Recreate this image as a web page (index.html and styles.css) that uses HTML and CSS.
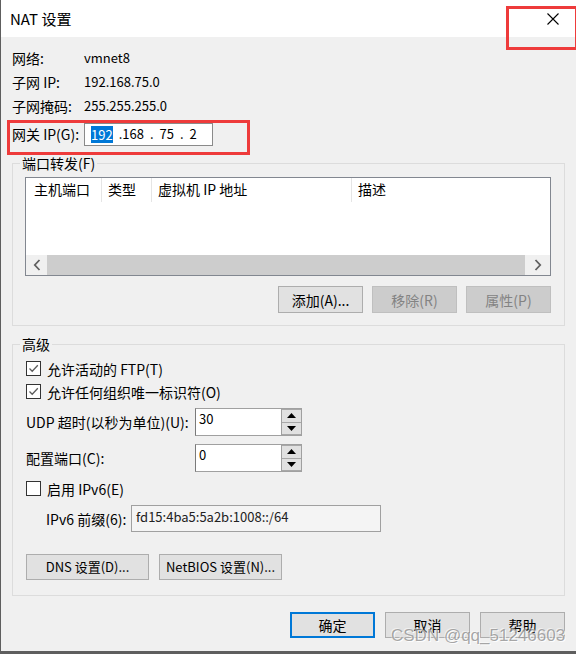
FILE: index.html
```html
<!DOCTYPE html>
<html lang="zh-CN">
<head>
<meta charset="utf-8">
<title>NAT 设置</title>
<link rel="stylesheet" href="styles.css">
</head>
<body>
<div class="win">
  <div class="titlebar">
    <span class="title">NAT 设置</span>
    <span class="close">
      <svg width="12" height="12" viewBox="0 0 12 12"><path d="M0.5 0.5 L11.5 11.5 M11.5 0.5 L0.5 11.5" stroke="#000" stroke-width="1.1" fill="none"/></svg>
    </span>
  </div>
  <div class="content">
    <div class="info">
      <div class="row"><span class="lbl">网络:</span><span class="val">vmnet8</span></div>
      <div class="row"><span class="lbl">子网 IP:</span><span class="val">192.168.75.0</span></div>
      <div class="row"><span class="lbl">子网掩码:</span><span class="val">255.255.255.0</span></div>
      <div class="row gw"><span class="lbl gwl">网关 IP(G):</span>
        <div class="ipbox"><span class="sel">192</span><span>.168</span><span>.</span><span>75</span><span>.</span><span>2</span></div>
      </div>
    </div>

    <fieldset class="group g1">
      <legend>端口转发(F)</legend>
      <div class="list">
        <div class="lhead">
          <div class="col c1">主机端口</div>
          <div class="col c2">类型</div>
          <div class="col c3">虚拟机 IP 地址</div>
          <div class="col c4">描述</div>
        </div>
        <div class="lbody"></div>
        <div class="hscroll">
          <span class="sarr sl"><svg width="8" height="12" viewBox="0 0 8 12"><path d="M6.5 1 L1.8 6 L6.5 11" stroke="#606060" stroke-width="1.8" fill="none"/></svg></span>
          <div class="thumb"></div>
          <span class="sarr sr"><svg width="8" height="12" viewBox="0 0 8 12"><path d="M1.5 1 L6.2 6 L1.5 11" stroke="#606060" stroke-width="1.8" fill="none"/></svg></span>
        </div>
      </div>
      <div class="btnrow">
        <button class="btn">添加(A)...</button>
        <button class="btn" disabled>移除(R)</button>
        <button class="btn" disabled>属性(P)</button>
      </div>
    </fieldset>

    <fieldset class="group g2">
      <legend>高级</legend>
      <div class="chkrow"><span class="chk on"><svg width="11" height="11" viewBox="0 0 11 11"><path d="M1.5 5.5 L4.2 8.2 L9.8 2.3" stroke="#5c5c5c" stroke-width="1.3" fill="none"/></svg></span><span>允许活动的 FTP(T)</span></div>
      <div class="chkrow"><span class="chk on"><svg width="11" height="11" viewBox="0 0 11 11"><path d="M1.5 5.5 L4.2 8.2 L9.8 2.3" stroke="#5c5c5c" stroke-width="1.3" fill="none"/></svg></span><span>允许任何组织唯一标识符(O)</span></div>
      <div class="spinrow r1">
        <span class="slbl">UDP 超时(以秒为单位)(U):</span>
        <div class="spin"><div class="sfield">30</div><div class="sbtns"><span class="sb"><svg width="9" height="5" viewBox="0 0 9 5"><path d="M0 5 L4.5 0 L9 5 Z" fill="#000"/></svg></span><span class="sb"><svg width="9" height="5" viewBox="0 0 9 5"><path d="M0 0 L4.5 5 L9 0 Z" fill="#000"/></svg></span></div></div>
      </div>
      <div class="spinrow r2">
        <span class="slbl">配置端口(C):</span>
        <div class="spin"><div class="sfield">0</div><div class="sbtns"><span class="sb"><svg width="9" height="5" viewBox="0 0 9 5"><path d="M0 5 L4.5 0 L9 5 Z" fill="#000"/></svg></span><span class="sb"><svg width="9" height="5" viewBox="0 0 9 5"><path d="M0 0 L4.5 5 L9 0 Z" fill="#000"/></svg></span></div></div>
      </div>
      <div class="chkrow r3"><span class="chk"></span><span>启用 IPv6(E)</span></div>
      <div class="prefrow">
        <span class="plbl">IPv6 前缀(6):</span>
        <div class="pfield">fd15:4ba5:5a2b:1008::/64</div>
      </div>
      <div class="dnsrow">
        <button class="btn wide">DNS 设置(D)...</button>
        <button class="btn wide">NetBIOS 设置(N)...</button>
      </div>
    </fieldset>

    <div class="footer">
      <button class="btn def">确定</button>
      <button class="btn">取消</button>
      <button class="btn">帮助</button>
    </div>
  </div>

  <div class="mark mark-close"></div>
  <div class="mark mark-gw"></div>
  <div class="watermark">CSDN @qq_51246603</div>
</div>
</body>
</html>
```

FILE: styles.css
```css
html, body {
  margin: 0;
  padding: 0;
}
body {
  background: #5e5e5e;
  font-family: "Noto Sans CJK SC", "Liberation Sans", sans-serif;
  font-size: 14px;
  line-height: 16px;
  color: #000;
}
.win {
  position: relative;
  margin-left: 1px;
  width: 575px;
  height: 651px;
  background: #f0f0f0;
  overflow: hidden;
}
.titlebar {
  height: 37px;
  background: #fff;
  display: flex;
  align-items: center;
  justify-content: space-between;
}
.title {
  font-size: 15px;
  padding-left: 9px;
  padding-top: 1px;
}
.close {
  width: 46px;
  height: 37px;
  display: flex;
  align-items: center;
  justify-content: center;
  padding-left: 2px;
}
.content {
  padding: 9px 10px 0 11px;
}
.row {
  height: 24px;
  display: flex;
  align-items: center;
}
.lbl {
  width: 72px;
  flex: none;
}
.val {
  font-size: 13px;
}
.gw {
  margin-top: 4px;
}
.gwl {
  width: 72px;
}
.ipbox {
  width: 129px;
  height: 23px;
  box-sizing: border-box;
  border: 1px solid #8a8a8a;
  background: #fff;
  display: flex;
  align-items: center;
  gap: 6px;
  padding-left: 6px;
  font-size: 13px;
}
.sel {
  background: #0078d7;
  color: #fff;
  line-height: 17px;
}

.group {
  margin: 0;
  border: 1px solid #dcdcdc;
  min-width: 0;
}
.group legend {
  padding: 0 2px;
  line-height: 16px;
}
.g1 {
  margin-top: 9px;
  width: 553px;
  box-sizing: border-box;
  padding: 6px 13px 12px 12px;
}
.g1 legend {
  margin-left: -5px;
}
.list {
  width: 526px;
  height: 99px;
  box-sizing: border-box;
  border: 1px solid #828790;
  background: #fff;
  display: flex;
  flex-direction: column;
}
.lhead {
  display: flex;
  height: 24px;
  align-items: stretch;
}
.col {
  border-right: 1px solid #e5e5e5;
  padding-left: 6px;
  box-sizing: border-box;
  display: flex;
  align-items: center;
  padding-bottom: 2px;
}
.c1 { width: 76px; padding-left: 8px; }
.c2 { width: 50px; }
.c3 { width: 200px; }
.c4 { border-right: none; flex: 1; }
.lbody { flex: 1; }
.hscroll {
  height: 20px;
  display: flex;
  background: #f0f0f0;
}
.sarr {
  display: flex;
  align-items: center;
  justify-content: center;
  flex: none;
}
.sl { width: 21px; }
.sr { width: 25px; }
.thumb {
  flex: 1;
  background: #cdcdcd;
}
.btnrow {
  margin-top: 10px;
  display: flex;
  justify-content: flex-end;
  gap: 9px;
  padding-right: 0;
}
.btn {
  font-family: inherit;
  font-size: 14px;
  line-height: 16px;
  color: #000;
  width: 85px;
  height: 27px;
  box-sizing: border-box;
  background: #e1e1e1;
  border: 1px solid #adadad;
  border-radius: 0;
  padding: 0;
  margin: 0;
}
.btn:disabled {
  background: #cccccc;
  border-color: #bfbfbf;
  color: #838383;
}

.g2 {
  margin-top: 10px;
  width: 553px;
  box-sizing: border-box;
  padding: 5px 13px 15px 13px;
}
.g2 legend {
  margin-left: -6px;
}
.chkrow {
  height: 23px;
  display: flex;
  align-items: center;
  gap: 6px;
}
.chk {
  width: 13px;
  height: 13px;
  border: 1px solid #333;
  background: #fff;
  display: flex;
  align-items: center;
  justify-content: center;
  flex: none;
}
.spinrow {
  display: flex;
  align-items: center;
  height: 28px;
}
.r1 { margin-top: 5px; }
.r2 { margin-top: 8px; }
.slbl {
  width: 169px;
  flex: none;
}
.spin {
  width: 107px;
  height: 28px;
  box-sizing: border-box;
  display: flex;
  border: 1px solid #a0a0a0;
  border-left-color: #7a7a7a;
  background: #fff;
}
.sfield {
  flex: 1;
  padding-left: 3px;
  padding-top: 2px;
  font-size: 13px;
  border-right: 1px solid #a0a0a0;
}
.sbtns {
  width: 19px;
  display: flex;
  flex-direction: column;
  gap: 1px;
  background: #a8a8a8;
  padding: 1px 0;
  box-sizing: border-box;
}
.sb {
  flex: 1;
  background: #e1e1e1;
  display: flex;
  align-items: center;
  justify-content: center;
}
.r3 { margin-top: 5px; }
.prefrow {
  margin-top: 5px;
  display: flex;
  align-items: center;
  height: 27px;
  padding-left: 20px;
}
.plbl {
  width: 85px;
  flex: none;
}
.pfield {
  width: 250px;
  height: 27px;
  box-sizing: border-box;
  border: 1px solid #a0a0a0;
  background: #f4f4f4;
  font-size: 13px;
  padding: 3px 0 0 4px;
  color: #222;
}
.dnsrow {
  margin-top: 22px;
  display: flex;
  gap: 10px;
}
.wide {
  width: 123px;
  height: 26px;
  font-size: 13px;
}
.footer {
  margin-top: 16px;
  display: flex;
  justify-content: flex-end;
  gap: 10px;
  padding-right: 1px;
}
.footer .btn {
  height: 26px;
}
.def {
  border: 2px solid #0078d7;
}

.mark {
  position: absolute;
  border: 3px solid #ee3b3b;
  box-sizing: border-box;
}
.mark-close {
  left: 505px;
  top: 6px;
  width: 72px;
  height: 44px;
}
.mark-gw {
  left: 6px;
  top: 120px;
  width: 243px;
  height: 35px;
}
.watermark {
  position: absolute;
  left: 390px;
  top: 626px;
  font-family: "Liberation Sans", sans-serif;
  font-size: 17px;
  line-height: 20px;
  color: rgba(140, 140, 140, 0.75);
  text-shadow: 1px 1px 0 rgba(255, 255, 255, 0.9), -1px -1px 0 rgba(255,255,255,0.5);
  white-space: nowrap;
}
```
